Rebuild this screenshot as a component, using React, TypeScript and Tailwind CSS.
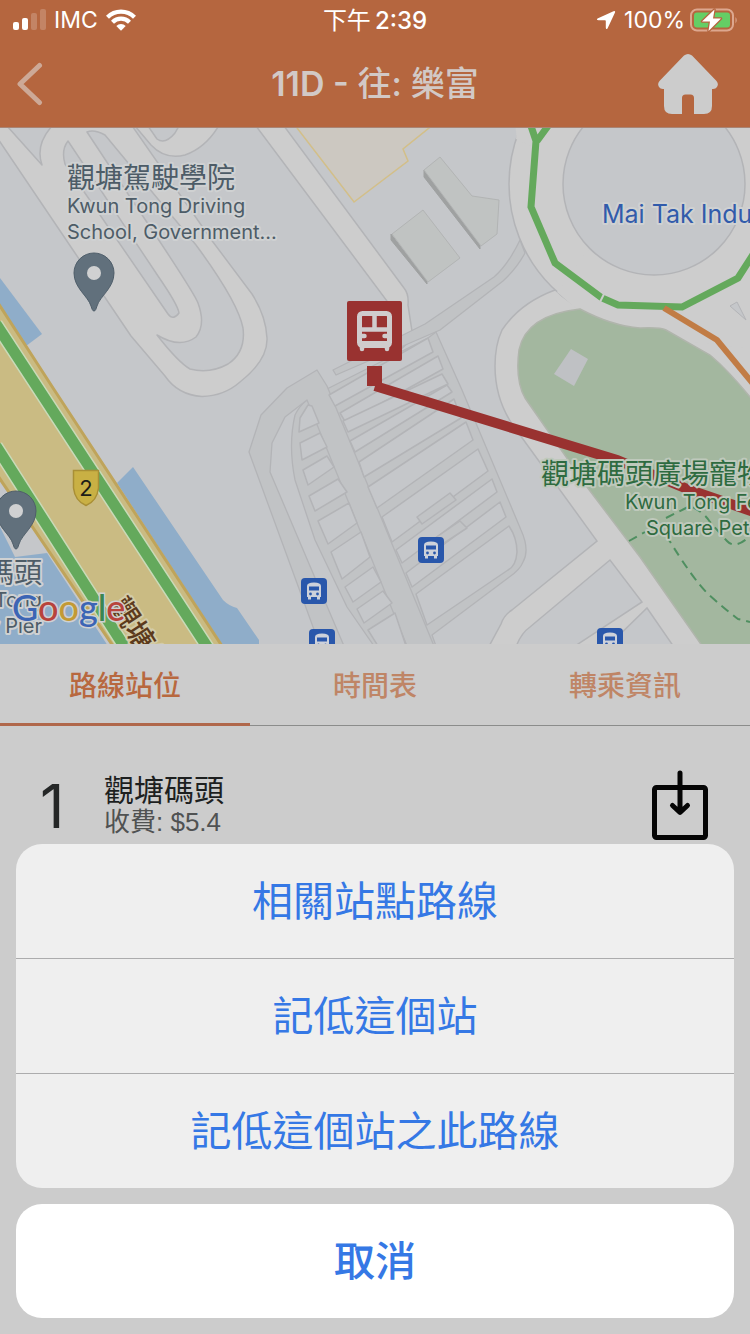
import React from "react";

const FONT =
  "font-['Inter','Noto_Sans_CJK_TC',sans-serif]";

const LAND = "#c5c7ca";
const ROAD = "#cdcdcd";
const LANE = "#c1c3c5";
const EDGE = "#b3b4b7";
const PARK = "#a3b79f";
const WATER = "#8fadc9";
const TRAFFIC = "#64a95c";

const leftBays = [
  "308,405 300,418 299,432 319,423 312,406",
  "300,443 320,433 327,447 302,460",
  "303,470 327,456 334,467 308,485",
  "309,496 338,479 347,492 315,511",
  "318,521 349,503 357,523 328,544",
  "331,552 361,532 370,557 342,579",
  "345,587 373,567 381,582 353,602",
  "357,609 383,591 392,603 364,623",
  "368,630 395,613 406,646 378,646",
];

const rightBays = [
  "329,395 428,338 433,352 335,406",
  "340,413 438,356 443,369 346,423",
  "343,421 442,374 448,384 348,432",
  "350,441 447,385 452,392 355,452",
  "359,462 454,399 461,418 364,477",
  "368,487 466,422 473,440 377,508",
  "382,517 478,449 488,471 392,542",
  "396,550 492,479 497,492 402,563",
  "406,573 500,502 506,517 412,587",
];

function Pin({ x, y }: { x: number; y: number }) {
  return (
    <g transform={`translate(${x} ${y})`}>
      <path
        d="M0 38 C-1.500 38 -2 36 -3 33 C-6 23 -20 15 -20 0 A20 20 0 0 1 20 0 C20 15 6 23 3 33 C2 36 1.500 38 0 38Z"
        fill="#61707c"
        stroke="#4f5e6a"
        strokeWidth="1"
      />
      <circle r="7" fill="#d0d1d2" />
    </g>
  );
}

function BusBadge({ x, y }: { x: number; y: number }) {
  return (
    <g transform={`translate(${x} ${y})`}>
      <rect width="26" height="26" rx="4" fill="#2957ab" />
      <path
        d="M6 8 Q6 4.500 13 4.500 Q20 4.500 20 8 V19 H19 V21.500 H16 V19 H10 V21.500 H7 V19 H6Z"
        fill="#cdd1da"
      />
      <rect x="8" y="8.500" width="10" height="4" fill="#2957ab" />
      <circle cx="9.500" cy="16" r="1.400" fill="#2957ab" />
      <circle cx="16.500" cy="16" r="1.400" fill="#2957ab" />
    </g>
  );
}

function MapView() {
  const halo = {
    stroke: "#cfd1d2",
    strokeWidth: 4,
    strokeLinejoin: "round" as const,
    paintOrder: "stroke",
  };
  return (
    <svg
      role="img"
      aria-label="Map"
      viewBox="0 128 750 516"
      preserveAspectRatio="xMidYMid slice"
      className={`block h-[516px] w-full ${FONT}`}
    >
      <rect x="-400" y="128" width="1600" height="516" fill={LAND} />

      {/* driving school track */}
      <g stroke={EDGE} strokeWidth="1.500" strokeLinejoin="round">
        <path
          d="M-2 139 L75 253 L131 336 L165 376 Q178 395 202 396.500 Q224 396 240 382 Q268 360 267 338 Q266 316 252 294 L213 242 L128 120 L-2 120Z"
          fill={ROAD}
        />
        <path d="M7 126 L42 165 Q35 145 52 126Z" fill={LAND} />
        <path
          d="M68 141 Q61 150 65 164 L168 314 Q173 321 179 313 Q178 305 158 276Z"
          fill={LAND}
        />
        <path
          d="M87 132 Q94 129 105 135 L196 245 Q238 302 243 328 Q246 352 228 364 Q210 374 190 369 Q178 362 157 335 Q180 349 196 337 Q206 325 198 303 Q194 292 130 197Z"
          fill={LAND}
        />
        <path
          d="M135 126 L151 145 Q165 160 185 155 Q205 148 218 127Z"
          fill={ROAD}
        />
        <path d="M148 126 L157 139 Q165 145 175 133 L179 126Z" fill={LAND} />
      </g>

      {/* buildings */}
      <path
        d="M294 124 L354 202 L408 161 L403 149 L434 124Z"
        fill="#ccc8c1"
        stroke="#d3bf88"
        strokeWidth="1.500"
      />
      <path d="M424 170 L480 245 L480 249 L424 177Z" fill="#9fa1a1" stroke="#9fa1a1" />
      <path
        d="M440 157 L472 196 L499 200 L497 234 L481 246 L424 170Z"
        fill="#c0c3c2"
        stroke="#b2b4b4"
      />
      <path d="M391 234 L427 281 L427 284 L391 240Z" fill="#9fa1a1" stroke="#9fa1a1" />
      <path
        d="M423 210 L460 258 L428 282 L392 234Z"
        fill="#c0c3c2"
        stroke="#b2b4b4"
      />

      {/* roundabout and the streets round the park */}
      <path
        d="M555 290 Q520 303 502 330 Q495 345 495 366 Q495 398 512 424 L597 541 L512 610 Q504 615 501 624 L487 650 L515 650 Q520 634 530 627 L610 560 L642 602 L572 648 L604 650 L647 608 L676 650 L800 650 L800 260Z"
        fill={ROAD}
        stroke={EDGE}
        strokeWidth="1.500"
      />
      <circle cx="654" cy="184" r="145" fill={ROAD} stroke={EDGE} strokeWidth="1.500" />
      <path
        d="M514 122 Q517 131 516 139 L540 150 L525 122Z M557 292 L580 312 L640 336 L760 350 V100 H700Z"
        fill={ROAD}
      />
      <circle cx="654" cy="184" r="91" fill={LAND} stroke={EDGE} strokeWidth="1.500" />
      <path
        d="M580 309 Q612 326 640 328 Q660 327 666 330 L710 355 Q728 370 750 397 L800 450 V650 H705 L640 557 L587 487 L525 398 Q515 380 519 350 Q526 315 580 309Z"
        fill={PARK}
        stroke="#b0b5ac"
        strokeWidth="1.500"
      />
      <path d="M571 349 L588 359 L574 386 L554 374Z" fill="#bfc1c4" />
      <path d="M730 306 L737 302 L746 320Z" fill={LAND} stroke={EDGE} />
      <path
        d="M629 541 L645 532 M666 518 L690 506 Q704 512 710 522 L727 541 Q735 550 750 536 M666 535 Q692 578 708 594 Q726 610 738 619 L750 622"
        fill="none"
        stroke="#4f8f60"
        strokeWidth="2"
        strokeDasharray="9 6"
      />

      {/* street leading to the terminus */}
      <path
        d="M256 126 L387 301 L400 350 L413 338 L408 305 Q409 294 404 288 L284 126Z"
        fill={ROAD}
        stroke={EDGE}
        strokeWidth="1.500"
      />

      {/* terminus lanes */}
      <g fill={LANE} stroke={EDGE} strokeWidth="1.300" strokeLinejoin="round">
        <path d="M520 240 Q508 265 494 277 L425 324 L333 370 L336 375 L440 330 L503 281 Q517 268 525 253Z" />
        <path d="M428 338 L436 332 L462 390 L521 530 Q530 550 523 562 Q520 570 508 578 L432 635 L436 646 L374 646 L347 607 L315 540 L295 480 Q288 445 295 415 Q300 405 307 400 L329 388Z" />
        <path d="M317 370 L287 388 L261 415 L249 452 L320 646 L344 646 L270 472 L272 443 L285 417 L307 400 L407 646 L434 646 L327 386Z" />
      </g>
      <g fill={LAND} stroke={EDGE} strokeWidth="1.500" strokeLinejoin="round">
        {leftBays.map((points) => (
          <polygon key={points} points={points} />
        ))}
        {rightBays.map((points) => (
          <polygon key={points} points={points} />
        ))}
        <path d="M416 594 L509 526 Q517 538 517 552 Q516 566 508 570 L427 625Z" />
        <path d="M417 517 L450 493 L456 500 L422 524Z" fill={LANE} />
        <path d="M425 545 L460 521 L467 528 L432 551Z" fill={LANE} />
      </g>

      {/* harbour */}
      <g fill={WATER}>
        <path d="M0 278 L42 334 L26 346 L0 308Z" />
        <path d="M133 467 L223 600 Q229 606 237 608 L259 640 V646 H223 L117 483Z" />
        <path d="M0 527 L15 557 L47 553 L108 646 H0Z" />
      </g>

      {/* highway */}
      <path
        d="M-2 303 L53 388 L222 646 H113 L-2 476Z"
        fill="#cabb83"
        stroke="#bfa45b"
        strokeWidth="3"
      />
      <g fill="none">
        <path d="M-4 324 L208 648 M-4 446 L124 646" stroke="#c9dab8" strokeWidth="14" />
        <path d="M-4 324 L208 648 M-4 446 L124 646" stroke={TRAFFIC} strokeWidth="11" />
        <path
          d="M531 126 L536 141 L531 207 L555 263 L602 298 L618 305 L682 307 L738 278 L756 250 M548 126 L537 141"
          stroke={TRAFFIC}
          strokeWidth="7"
        />
        <path d="M600 302 L604 294" stroke={ROAD} strokeWidth="2" />
        <path d="M664 308 L717 340 L754 385" stroke="#c17c45" strokeWidth="6" />
      </g>

      {/* selected route */}
      <path d="M375 386 L617 460 L690 490 L754 512" fill="none" stroke="#993230" strokeWidth="10" />
      <rect x="367" y="366" width="15" height="20" fill="#993230" />
      <g transform="translate(347 301)">
        <rect width="55" height="60" rx="2" fill="#993230" />
        <rect x="12.500" y="12.500" width="30" height="32" rx="3" fill="none" stroke="#d0cccd" strokeWidth="5" />
        <path d="M27.500 12 V28 M12 28.500 H43" stroke="#d0cccd" strokeWidth="4.500" />
        <path
          d="M13 35 H17.500 M37.500 35 H42 M15 45 V48 M40 45 V48"
          stroke="#d0cccd"
          strokeWidth="4.500"
          strokeLinecap="round"
        />
        <path d="M13 42.500 H42" stroke="#d0cccd" strokeWidth="5" />
      </g>

      <BusBadge x={418} y={537} />
      <BusBadge x={301} y={578} />
      <BusBadge x={309} y={629} />
      <BusBadge x={597} y={628} />

      <path
        d="M73.500 470.500 H98.500 V488 Q97 501 86 505.500 Q75 501 73.500 488Z"
        fill="#c9b044"
        stroke="#a98f35"
        strokeWidth="1.500"
      />
      <text x="86" y="496" fontSize="22" textAnchor="middle" fill="#1d1d18">2</text>

      <Pin x={94} y={273} />
      <Pin x={16} y={511} />

      <g fill="#4d5c67">
        <text x="67" y="188" fontSize="28" {...halo}>觀塘駕駛學院</text>
        <text x="67" y="213" fontSize="20" {...halo}>Kwun Tong Driving</text>
        <text x="67" y="239" fontSize="20" {...halo}>School, Government...</text>
        <g textAnchor="end">
          <text x="42" y="583" fontSize="28" {...halo}>碼頭</text>
          <text x="42" y="607" fontSize="20" {...halo}>Kwun Tong</text>
          <text x="42" y="633" fontSize="20" {...halo}>Ferry Pier</text>
        </g>
      </g>
      <text x="602" y="223" fontSize="25" fill="#315bab" {...halo}>Mai Tak Industrial</text>
      <g fill="#2e6b40">
        <text x="541" y="484" fontSize="28" {...halo} stroke="#bfc9bc">觀塘碼頭廣場寵物公園</text>
        <text x="625" y="509" fontSize="20" {...halo} stroke="#bfc9bc">Kwun Tong Ferry</text>
        <text x="646" y="535" fontSize="20" {...halo} stroke="#bfc9bc">Square Pet Garden</text>
      </g>
      <text
        transform="translate(109 606) rotate(57)"
        fontSize="28"
        fontWeight="500"
        fill="#5c3a1c"
        {...halo}
        stroke="#d3cba8"
      >
        觀塘繞道
      </text>
      <text
        x="12"
        y="621"
        fontSize="36"
        fontWeight="500"
        className="font-['Lato','Inter',sans-serif]"
        stroke="#cfd1d2"
        strokeWidth="3"
        paintOrder="stroke"
      >
        <tspan fill="#3c65b5">G</tspan>
        <tspan fill="#b8433c">o</tspan>
        <tspan fill="#c39a35">o</tspan>
        <tspan fill="#3c65b5">g</tspan>
        <tspan fill="#3a8650">l</tspan>
        <tspan fill="#b8433c">e</tspan>
      </text>
    </svg>
  );
}

function StatusBar() {
  return (
    <div className="grid h-10 grid-cols-3 items-center px-3 text-[23px] leading-none text-white">
      <div className="flex items-center gap-2">
        <svg viewBox="0 0 34 22" className="h-[22px] w-[34px]" aria-hidden="true">
          <rect x="1" y="13" width="6" height="8" rx="2" fill="#fff" />
          <rect x="10" y="9" width="6" height="12" rx="2" fill="#fff" />
          <rect x="19" y="4" width="6" height="17" rx="2" fill="#fff" opacity="0.200" />
          <rect x="28" y="0" width="6" height="21" rx="2" fill="#fff" opacity="0.200" />
        </svg>
        <span>IMC</span>
        <svg viewBox="0 0 30 22" className="h-[22px] w-[30px]" aria-hidden="true">
          <g fill="none" stroke="#fff" strokeWidth="4.200">
            <path d="M1.500 8.200 A19 19 0 0 1 28.500 8.200" />
            <path d="M6.500 13.200 A12 12 0 0 1 23.500 13.200" />
          </g>
          <path d="M10.300 17 A6.600 6.600 0 0 1 19.700 17 L15 21.800Z" fill="#fff" />
        </svg>
      </div>
      <div className="flex items-center justify-center gap-1 pt-px text-[24px] font-medium">
        <span className="font-normal">下午</span>
        <span>2:39</span>
      </div>
      <div className="flex items-center justify-end gap-1">
        <svg viewBox="0 0 20 20" className="h-5 w-5" aria-hidden="true">
          <path d="M18.500 1 Q19.500 1 19 2.500 L11.500 18.500 Q10 20 9.800 17.500 V11 Q9.800 10.200 9 10.200 H2.500 Q0 10 1.500 8.500 L17.500 1.200Z" fill="#fff" />
        </svg>
        <span className="pl-1">100%</span>
        <svg viewBox="0 0 49 24" className="h-6 w-[49px]" aria-hidden="true">
          <rect x="2" y="1.500" width="42" height="21" rx="6" fill="none" stroke="#dda78f" strokeWidth="2" />
          <path d="M46.500 9 Q49 12 46.500 15.500Z" fill="#dda78f" />
          <rect x="5" y="4.500" width="36" height="15" rx="3" fill="#65ce65" />
          <path
            d="M25.500 1.500 L13 13.500 H21 L19.500 23 L32 10.500 H24Z"
            fill="#fff"
            stroke="#b5663f"
            strokeWidth="2.500"
            strokeLinejoin="round"
            paintOrder="stroke"
          />
        </svg>
      </div>
    </div>
  );
}

const tabs = ["路線站位", "時間表", "轉乘資訊"];
const actions = ["相關站點路線", "記低這個站", "記低這個站之此路線"];

export default function App() {
  return (
    <div className={`relative flex min-h-screen flex-col bg-[#cccccc] ${FONT}`} lang="zh-HK">
      <header className="border-b border-[#a98474] bg-[#b5663f]">
        <StatusBar />
        <div className="grid h-[87px] grid-cols-[112px_1fr_112px] items-center">
          <button type="button" aria-label="返回" className="flex pl-4">
            <svg viewBox="0 0 28 44" className="h-11 w-7" aria-hidden="true">
              <path
                d="M23.500 3.500 L4 22 L23.500 40.500"
                fill="none"
                stroke="#cda997"
                strokeWidth="5"
                strokeLinecap="round"
                strokeLinejoin="round"
              />
            </svg>
          </button>
          <h1 className="pt-px text-center text-[34px] leading-10 font-semibold text-[#d2c9c6]">
            11D - <span className="font-medium">往: 樂富</span>
          </h1>
          <button type="button" aria-label="主頁" className="flex justify-end pr-8">
            <svg viewBox="0 0 60 60" className="h-[60px] w-[60px]" aria-hidden="true">
              <path
                d="M26 1.500 Q30 -1.500 34 1.500 L58.500 27 Q61 30 59 33 Q57.500 35.500 54 35 V52 Q54 60 46 60 H36 V44 Q36 40.500 32.500 40.500 H27.500 Q24 40.500 24 44 V60 H14 Q6 60 6 52 V35 Q2.500 35.500 1 33 Q-1 30 1.500 27Z"
                fill="#cccccc"
              />
            </svg>
          </button>
        </div>
      </header>

      <MapView />

      <nav role="tablist" className="grid h-[82px] grid-cols-3 border-b border-[#8b8c8b] text-[28px]">
        {tabs.map((tab, index) => (
          <button
            key={tab}
            type="button"
            role="tab"
            aria-selected={index === 0}
            className={
              index === 0
                ? "-mb-px border-b-3 border-[#b0674a] pt-1 font-medium text-[#b8683f]"
                : "pt-1 pb-0.5 font-medium text-[#bf8566]"
            }
          >
            {tab}
          </button>
        ))}
      </nav>

      <main className="flex items-center px-10 pt-11">
        <span className="w-16 text-[60px] leading-none text-[#252727]">1</span>
        <div className="flex-1">
          <h2 className="text-[30px] leading-8 text-[#1d1f1f]">觀塘碼頭</h2>
          <p className="font-['Liberation_Sans','Noto_Sans_CJK_TC',sans-serif] text-[26px] leading-8 text-[#505252]">
            收費: $5.4
          </p>
        </div>
        <button type="button" aria-label="儲存">
          <svg viewBox="0 0 60 72" className="h-[72px] w-[60px]" aria-hidden="true">
            <g fill="none" stroke="#050505" strokeWidth="5" strokeLinecap="round" strokeLinejoin="round">
              <rect x="4.500" y="17.500" width="51" height="50" rx="2" />
              <path d="M30 3 V42 M22.500 35.500 L30 42.500 L37.500 35.500" />
            </g>
          </svg>
        </button>
      </main>

      <div role="dialog" aria-label="選項" className="absolute inset-x-0 bottom-0 flex flex-col gap-4 p-4 text-[41px] text-[#3578e5]">
        <div className="flex flex-col divide-y divide-[#acacad] overflow-hidden rounded-[26px] bg-[#efefef]">
          {actions.map((action) => (
            <button key={action} type="button" className="box-content h-[112px] pt-0.5">
              {action}
            </button>
          ))}
        </div>
        <button type="button" className="h-[114px] rounded-[26px] bg-white pt-0.5 font-medium">
          取消
        </button>
      </div>
    </div>
  );
}
